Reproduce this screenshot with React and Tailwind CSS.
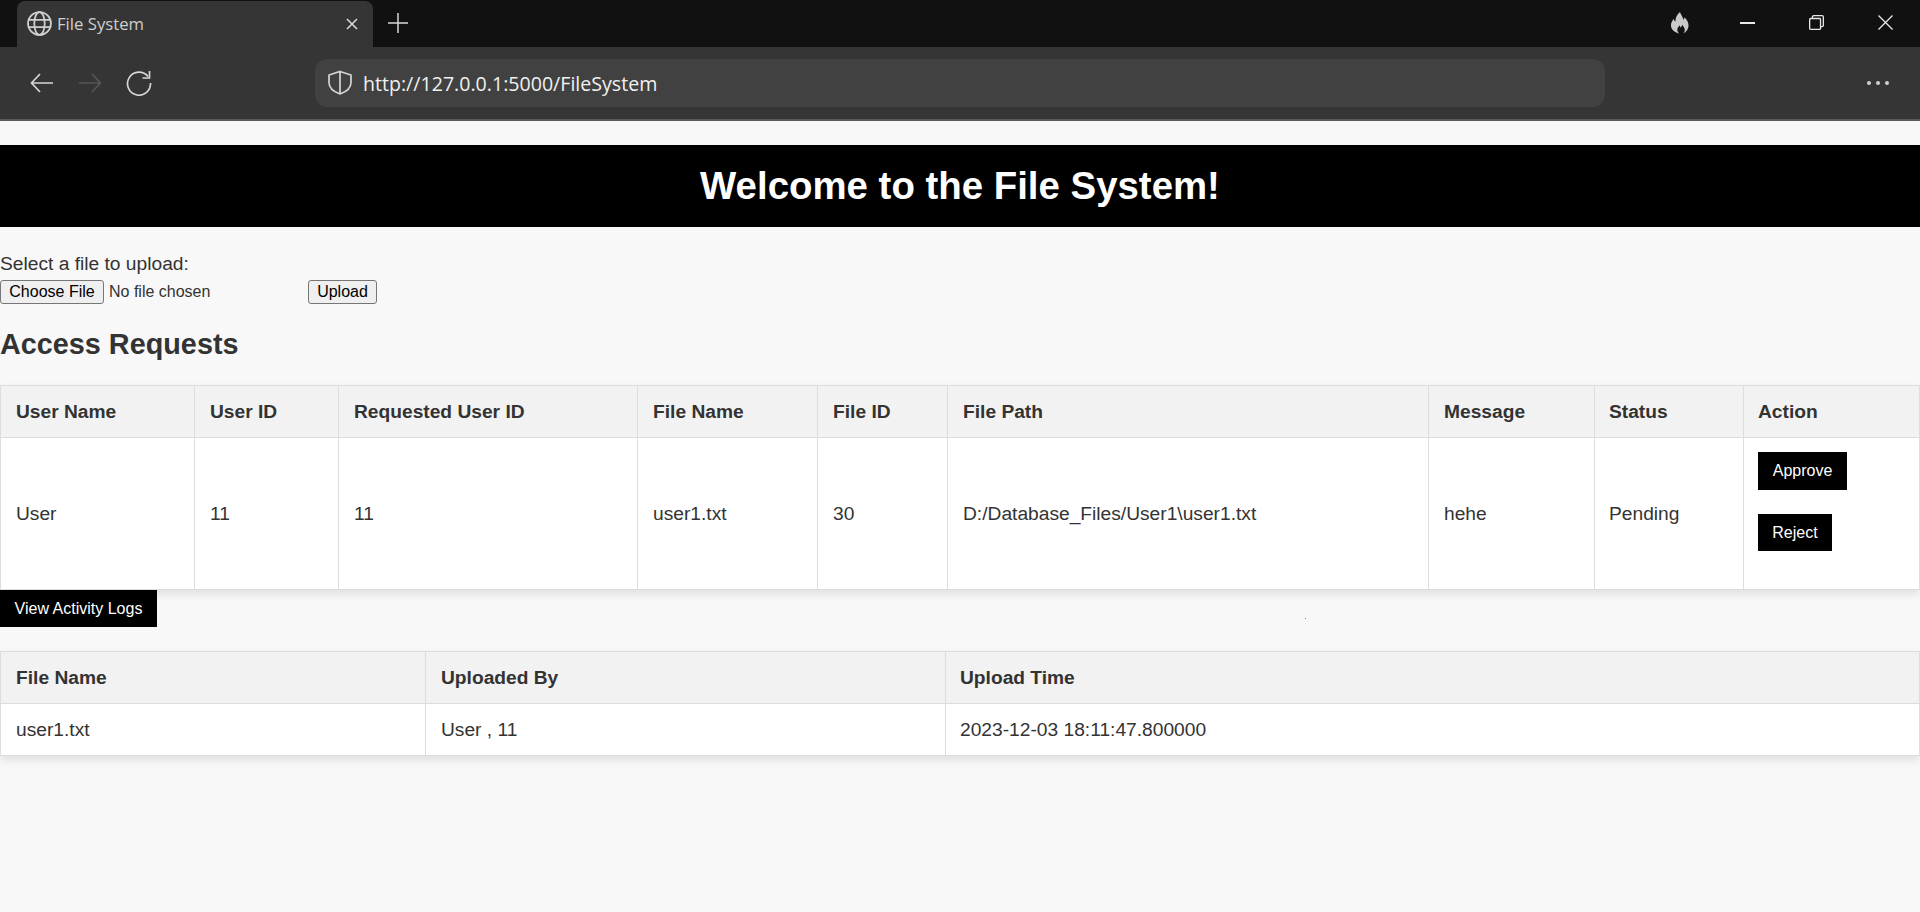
const arial = 'font-["Liberation_Sans",Arial,sans-serif]';

const TabBar = () => (
  <div className="flex h-[47px] bg-[#111111] text-[#d6d6d6]">
    <div className="ml-[17px] mt-px flex h-[46px] w-[356px] items-center rounded-t-lg bg-[#353535]">
      <svg className="ml-[10px] mb-px" width="25" height="25" viewBox="0 0 24 24" fill="none" stroke="#d0d0d0" strokeWidth="1.7">
        <circle cx="12" cy="12" r="11" />
        <ellipse cx="12" cy="12" rx="5" ry="11" />
        <path d="M1.5 8.5h21M1.5 15.5h21" />
      </svg>
      <span className='ml-[5px] font-["Open_Sans",sans-serif] text-[16.7px] text-[#cfcfcf]'>File System</span>
      <svg className="ml-auto mr-[14px]" width="14" height="14" viewBox="0 0 14 14" stroke="#dcdcdc" strokeWidth="1.5">
        <path d="M2 2l10 10M12 2L2 12" />
      </svg>
    </div>
    <svg className="ml-[14px] mt-[12px]" width="22" height="22" viewBox="0 0 22 22" stroke="#d8d8d8" strokeWidth="1.5">
      <path d="M11 1v20M1 11h20" />
    </svg>
    <div className="ml-auto flex items-center pb-[2px]">
      <svg className="mr-[51px]" width="19" height="23" viewBox="0 0 20 24" fill="#c9c9c9">
        <path d="M10.5 1c1 3.500 3 4.500 3.500 8 .8-.5 1.200-1.500 1.200-2.500C18 9.500 19.500 12 19.500 15c0 4-2.500 7.500-5.500 8.500 1.500-1.500 2-3.500 1.200-5.500-.5-1.300-1.500-2-1.700-3.500-1.500 1-2 2-2.200 3-.7-.7-1-1.500-1-2.500-1.500 1.500-3 3.500-2.500 5.500.2 1 .7 2 1.500 3C5 22.500 1 19.500 1 15c0-3 1.500-5 3-7 .2 1.300.7 2.300 1.800 3C5.500 7 7.500 3.500 10.500 1z" />
      </svg>
      <svg className="mr-[54px]" width="15" height="2" viewBox="0 0 15 2">
        <rect width="15" height="2" fill="#e8e8e8" />
      </svg>
      <svg className="mr-[54px]" width="15" height="15" viewBox="0 0 16 16" fill="none" stroke="#e8e8e8" strokeWidth="1.4">
        <rect x="0.700" y="3.700" width="11.600" height="11.600" rx="1" />
        <path d="M3.700 3.500V2a1.300 1.300 0 0 1 1.300-1.300h9a1.300 1.300 0 0 1 1.300 1.300v9a1.300 1.300 0 0 1-1.300 1.300h-1.500" />
      </svg>
      <svg className="mr-[27px]" width="15" height="15" viewBox="0 0 16 16" stroke="#e8e8e8" strokeWidth="1.400">
        <path d="M.5.500l15 15M15.500.500l-15 15" />
      </svg>
    </div>
  </div>
);

const AddressBar = () => (
  <div className="flex h-[74px] items-center border-b-2 border-[#5a5a5a] bg-[#353535]">
    <svg className="ml-[30px]" width="24" height="22" viewBox="0 0 24 22" fill="none" stroke="#d6d6d6" strokeWidth="1.7">
      <path d="M23 11H2M10 2l-8.500 9 8.500 9" />
    </svg>
    <svg className="ml-[24px]" width="24" height="22" viewBox="0 0 24 22" fill="none" stroke="#565656" strokeWidth="1.7">
      <path d="M1 11h21M14 2l8.500 9-8.500 9" />
    </svg>
    <svg className="ml-[24px]" width="26" height="26" viewBox="0 0 26 26" fill="none" stroke="#d6d6d6" strokeWidth="1.7">
      <path d="M22 6.500A11.500 11.500 0 1 0 24.500 13" />
      <path d="M23.500 1v7h-7" />
    </svg>
    <div className="ml-[163px] flex h-[48px] w-[1290px] items-center rounded-[12px] bg-[#414141]">
      <svg className="ml-[12px]" width="26" height="26" viewBox="0 0 26 26" fill="none" stroke="#d6d6d6" strokeWidth="1.7">
        <path d="M13 1.500l11 3.500v7.500c0 5.500-4 9-11 11.500C6 21.500 2 18 2 12.500V5L13 1.500zM13 1.500v22" />
      </svg>
      <span className='ml-[10px] pt-px font-["Open_Sans",sans-serif] text-[19.6px] text-[#f0f0f0]'>http://127.0.0.1:5000/FileSystem</span>
    </div>
    <div className="ml-auto mr-[31px] flex gap-[5px]">
      <span className="h-1 w-1 rounded-full bg-[#d0d0d0]" />
      <span className="h-1 w-1 rounded-full bg-[#d0d0d0]" />
      <span className="h-1 w-1 rounded-full bg-[#d0d0d0]" />
    </div>
  </div>
);

const Th = ({ children, style, className = '' }) => (
  <th style={style} className={`border border-[#dddddd] bg-[#f2f2f2] p-[15px] text-left align-middle text-[19.2px] font-bold leading-[21px] text-[#333333] ${className}`}>
    {children}
  </th>
);

const Td = ({ children, className = '' }) => (
  <td className={`border border-[#dddddd] bg-white p-[15px] text-left align-middle text-[19.2px] leading-[21px] text-[#333333] ${className}`}>
    {children}
  </td>
);

const DataTable = ({ columns, children }) => (
  <table className="w-[1919px] table-fixed border-collapse shadow-[0_4px_8px_rgba(0,0,0,0.1)]">
    <thead>
      <tr>
        {columns.map((col) => (
          <Th key={col.label} style={{ width: col.width }} className={col.className}>{col.label}</Th>
        ))}
      </tr>
    </thead>
    <tbody>{children}</tbody>
  </table>
);

const requestColumns = [
  { label: 'User Name', width: 194 },
  { label: 'User ID', width: 144 },
  { label: 'Requested User ID', width: 299 },
  { label: 'File Name', width: 180 },
  { label: 'File ID', width: 130 },
  { label: 'File Path', width: 481 },
  { label: 'Message', width: 166 },
  { label: 'Status', width: 149, className: 'pl-[14px]' },
  { label: 'Action', width: 176, className: 'pl-[14px]' },
];

const uploadColumns = [
  { label: 'File Name', width: 425 },
  { label: 'Uploaded By', width: 520 },
  { label: 'Upload Time', width: 974, className: 'pl-[14px]' },
];

const BlackButton = ({ children, className = '' }) => (
  <button className={`block bg-black text-center text-[16px] leading-[18px] text-white ${className}`}>
    {children}
  </button>
);

const App = () => (
  <div className={`relative min-h-[912px] bg-[#f8f8f8] ${arial}`}>
    <TabBar />
    <AddressBar />
    <h1 className="mt-[24px] bg-black py-[19px] text-center text-[38.4px] font-bold leading-[44px] text-white">
      Welcome to the File System!
    </h1>
    <div className="mt-[26px] text-[19.2px] leading-[22px] text-[#333333]">Select a file to upload:</div>
    <div className="mt-[5px] flex items-center">
      <button className="h-[24px] w-[104px] rounded-[3px] border border-[#767676] bg-[#efefef] text-[16px] leading-[18px] text-black">
        Choose File
      </button>
      <span className="ml-[5px] w-[199px] text-[16px] leading-[18px] text-[#333333]">No file chosen</span>
      <button className="h-[24px] w-[69px] rounded-[3px] border border-[#767676] bg-[#efefef] text-[16px] leading-[18px] text-black">
        Upload
      </button>
    </div>
    <h2 className="mt-[24px] text-[28.8px] font-bold leading-[33px] text-[#333333]">Access Requests</h2>
    <div className="mt-[24px]">
      <DataTable columns={requestColumns}>
        <tr>
          <Td>User</Td>
          <Td>11</Td>
          <Td>11</Td>
          <Td>user1.txt</Td>
          <Td>30</Td>
          <Td>D:/Database_Files/User1\user1.txt</Td>
          <Td>hehe</Td>
          <Td className="pl-[14px]">Pending</Td>
          <Td className="pl-[14px]">
            <BlackButton className="-mt-px h-[38px] w-[89px]">Approve</BlackButton>
            <BlackButton className="mt-[24px] mb-[23px] h-[37px] w-[74px]">Reject</BlackButton>
          </Td>
        </tr>
      </DataTable>
    </div>
    <BlackButton className="h-[37px] w-[157px]">View Activity Logs</BlackButton>
    {/* stray speck in the page */}
    <span className="absolute left-[1305px] top-[618px] h-px w-px bg-[#777777]" />
    <div className="mt-[24px]">
      <DataTable columns={uploadColumns}>
        <tr>
          <Td>user1.txt</Td>
          <Td>User , 11</Td>
          <Td className="pl-[14px]">2023-12-03 18:11:47.800000</Td>
        </tr>
      </DataTable>
    </div>
  </div>
);

export default App;
